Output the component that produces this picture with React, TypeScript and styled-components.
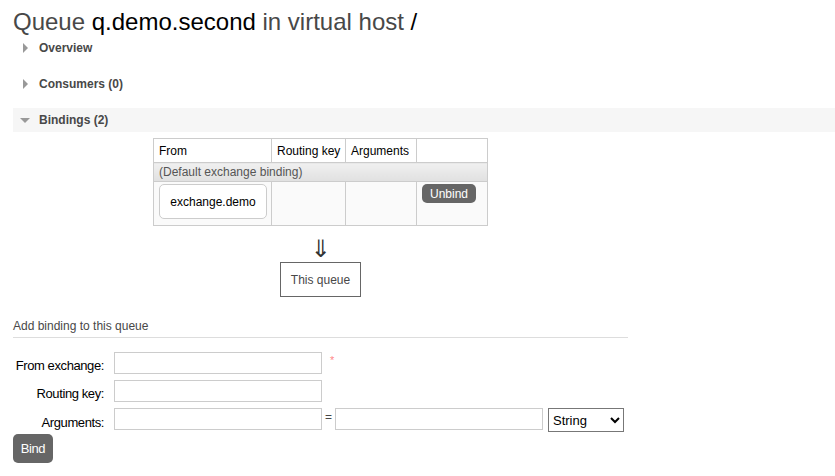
import { createGlobalStyle, styled } from "styled-components";

const GlobalStyle = createGlobalStyle`
  body {
    margin: 0;
    background: #fff;
    font-family: "Liberation Sans", Arial, sans-serif;
    font-size: 12px;
    color: #484848;
  }
`;

type Binding = {
  source: string;
  routingKey: string;
  args: string;
};

const bindings: Binding[] = [{ source: "exchange.demo", routingKey: "", args: "" }];

const App = () => {
  return (
    <Page>
      <GlobalStyle />
      <Title>
        Queue <b>q.demo.second</b> in virtual host <b>/</b>
      </Title>

      <Section>
        <SectionHeader>
          <Toggle />
          Overview
        </SectionHeader>
      </Section>
      <Section>
        <SectionHeader>
          <Toggle />
          Consumers (0)
        </SectionHeader>
      </Section>
      <Section>
        <SectionHeader $open>
          <Toggle $open />
          Bindings (2)
        </SectionHeader>

        <BindingsFlow>
          <BindingsTable>
            <thead>
              <tr>
                <th>From</th>
                <th>Routing key</th>
                <th>Arguments</th>
                <th></th>
              </tr>
            </thead>
            <tbody>
              <tr>
                <DefaultCell colSpan={4}>(Default exchange binding)</DefaultCell>
              </tr>
              {bindings.map((b, idx) => (
                <tr key={idx + "binding"}>
                  <td>
                    <ExchangeBox>{b.source}</ExchangeBox>
                  </td>
                  <td>{b.routingKey}</td>
                  <td>{b.args}</td>
                  <td>
                    <SmallButton>Unbind</SmallButton>
                  </td>
                </tr>
              ))}
            </tbody>
          </BindingsTable>
          <Arrow>⇓</Arrow>
          <QueueBox>This queue</QueueBox>
        </BindingsFlow>

        <FormTitle>Add binding to this queue</FormTitle>
        <Form>
          <Label>From exchange:</Label>
          <FieldRow>
            <TextInput />
            <Required>*</Required>
          </FieldRow>
          <Label>Routing key:</Label>
          <FieldRow>
            <TextInput />
          </FieldRow>
          <Label>Arguments:</Label>
          <FieldRow>
            <TextInput />
            <Equals>=</Equals>
            <TextInput />
            <TypeSelect defaultValue="string">
              <option value="string">String</option>
              <option value="number">Number</option>
              <option value="boolean">Boolean</option>
              <option value="list">List</option>
            </TypeSelect>
          </FieldRow>
        </Form>
        <BigButton>Bind</BigButton>
      </Section>
    </Page>
  );
};

const Page = styled.div`
  padding: 0 0 0 13px;
`;

const Title = styled.h1`
  margin: 0;
  height: 36px;
  padding-top: 9px;
  box-sizing: border-box;
  font-size: 24px;
  font-weight: 400;
  line-height: 26px;
  color: #484848;

  b {
    font-weight: 400;
    color: #000;
  }
`;

const Section = styled.div`
  margin-bottom: 12px;
`;

const SectionHeader = styled.div<{ $open?: boolean }>`
  display: flex;
  align-items: center;
  height: 24px;
  padding-left: 7px;
  gap: 9px;
  font-weight: 700;
  font-size: 12px;
  color: #484848;
  background: ${(p) => (p.$open ? "#f6f6f6" : "transparent")};
`;

const Toggle = styled.span<{ $open?: boolean }>`
  display: inline-block;
  width: 0;
  height: 0;
  ${(p) =>
    p.$open
      ? `
    margin: 1px 0 0 0;
    border-left: 5px solid transparent;
    border-right: 5px solid transparent;
    border-top: 5px solid #999;
  `
      : `
    margin: 0 2px 0 3px;
    border-top: 5px solid transparent;
    border-bottom: 5px solid transparent;
    border-left: 5px solid #999;
  `}
`;

const BindingsFlow = styled.div`
  display: flex;
  flex-direction: column;
  align-items: center;
  width: 335px;
  margin: 6px 0 0 140px;
`;

const BindingsTable = styled.table`
  width: 335px;
  table-layout: fixed;
  border-collapse: collapse;
  font-size: 12px;
  color: #000;

  th,
  td {
    border: 1px solid #ccc;
    padding: 0 5px;
    text-align: left;
    vertical-align: top;
    white-space: nowrap;
  }
  th {
    box-sizing: border-box;
    height: 24px;
    font-weight: 400;
    vertical-align: middle;
    background: #fff;
  }
  th:nth-child(1) {
    width: 118px;
  }
  th:nth-child(2) {
    width: 74px;
  }
  th:nth-child(3) {
    width: 71px;
  }
  tbody tr:last-child td {
    height: 44px;
    box-sizing: border-box;
    background: #fafafa;
    padding: 2px 5px;
  }
`;

const DefaultCell = styled.td`
  && {
    height: 18px;
    vertical-align: middle;
    color: #555;
    background: linear-gradient(#f0f0f0, #e0e0e0);
  }
`;

const ExchangeBox = styled.div`
  display: flex;
  align-items: center;
  justify-content: center;
  width: 106px;
  height: 33px;
  border: 1px solid #ccc;
  border-radius: 5px;
  background: #fff;
  color: #000;
  font-size: 12px;
`;

const SmallButton = styled.button`
  padding: 0 8px;
  height: 19px;
  border: none;
  border-radius: 5px;
  background: #666;
  color: #fff;
  font-family: "Liberation Sans", Arial, sans-serif;
  font-size: 12px;
`;

const Arrow = styled.div`
  margin-top: 12px;
  height: 22px;
  font-family: "DejaVu Sans", sans-serif;
  font-size: 24px;
  line-height: 22px;
  color: #333;
`;

const QueueBox = styled.div`
  display: flex;
  align-items: center;
  justify-content: center;
  width: 79px;
  height: 33px;
  margin-top: 2px;
  border: 1px solid #666;
  color: #484848;
  font-size: 12px;
`;

const FormTitle = styled.h3`
  margin: 21px 0 0 0;
  width: 615px;
  padding-bottom: 3px;
  border-bottom: 1px solid #ddd;
  font-size: 12px;
  font-weight: 400;
  line-height: 16px;
  color: #484848;
`;

const Form = styled.div`
  display: grid;
  grid-template-columns: 91px auto;
  column-gap: 10px;
  row-gap: 6px;
  align-items: center;
  margin-top: 14px;
`;

const Label = styled.label`
  text-align: right;
  font-size: 13px;
  letter-spacing: -0.4px;
  color: #000;
  padding-top: 4px;
`;

const FieldRow = styled.div`
  display: flex;
  align-items: flex-start;
`;

const TextInput = styled.input`
  width: 208px;
  height: 22px;
  box-sizing: border-box;
  margin: 0;
  border: 1px solid #ccc;
  border-radius: 0;
  padding: 0 4px;
  font-family: "Liberation Sans", Arial, sans-serif;
  font-size: 12px;
`;

const Required = styled.span`
  margin: 2px 0 0 8px;
  color: #f88;
  font-size: 11px;
`;

const Equals = styled.span`
  width: 13px;
  text-align: center;
  padding-top: 2px;
  color: #484848;
  font-size: 12px;
`;

const TypeSelect = styled.select`
  margin-left: 5px;
  width: 76px;
  height: 24px;
  border: 1px solid #777;
  border-radius: 0;
  background: #fff;
  font-family: "Liberation Sans", Arial, sans-serif;
  font-size: 13px;
  color: #000;
`;

const BigButton = styled.button`
  display: block;
  margin-top: 2px;
  width: 40px;
  height: 29px;
  padding: 0;
  border: none;
  border-radius: 5px;
  background: #666;
  color: #fff;
  font-family: "Liberation Sans", Arial, sans-serif;
  font-size: 13px;
  letter-spacing: -0.4px;
`;

export default App;
